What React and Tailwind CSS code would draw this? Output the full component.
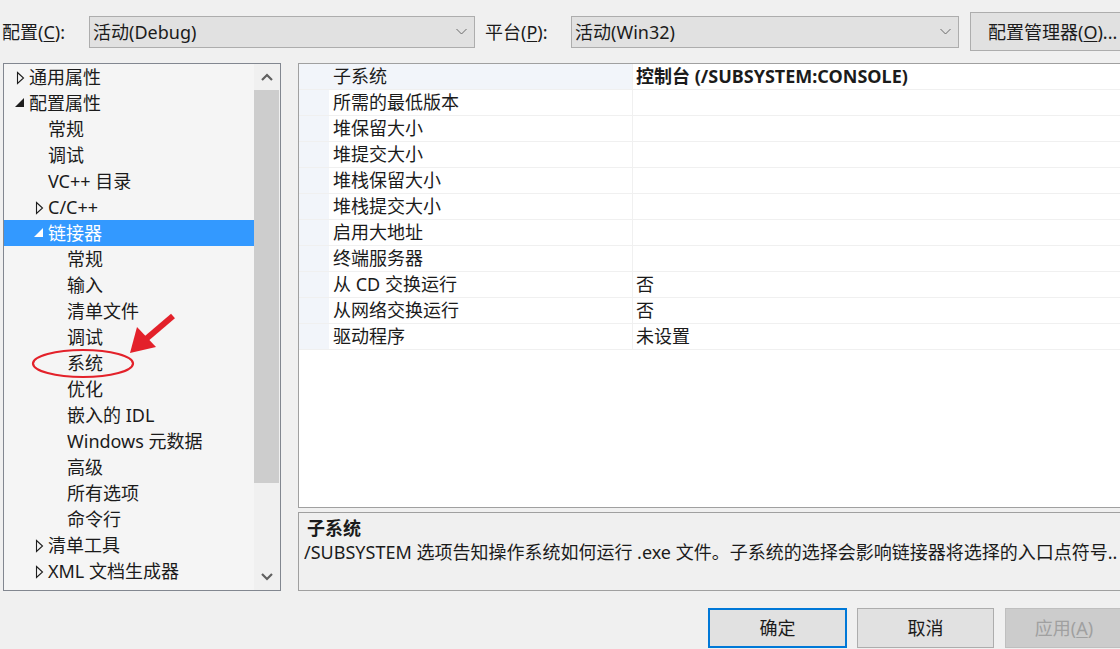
import React from "react";

const tree = [
  { t: "通用属性", l: 0, tri: "c" },
  { t: "配置属性", l: 0, tri: "e" },
  { t: "常规", l: 1 },
  { t: "调试", l: 1 },
  { t: "VC++ 目录", l: 1 },
  { t: "C/C++", l: 1, tri: "c" },
  { t: "链接器", l: 1, tri: "e", sel: true },
  { t: "常规", l: 2 },
  { t: "输入", l: 2 },
  { t: "清单文件", l: 2 },
  { t: "调试", l: 2 },
  { t: "系统", l: 2 },
  { t: "优化", l: 2 },
  { t: "嵌入的 IDL", l: 2 },
  { t: "Windows 元数据", l: 2 },
  { t: "高级", l: 2 },
  { t: "所有选项", l: 2 },
  { t: "命令行", l: 2 },
  { t: "清单工具", l: 1, tri: "c" },
  { t: "XML 文档生成器", l: 1, tri: "c" },
];

const props = [
  ["子系统", "控制台 (/SUBSYSTEM:CONSOLE)"],
  ["所需的最低版本", ""],
  ["堆保留大小", ""],
  ["堆提交大小", ""],
  ["堆栈保留大小", ""],
  ["堆栈提交大小", ""],
  ["启用大地址", ""],
  ["终端服务器", ""],
  ["从 CD 交换运行", "否"],
  ["从网络交换运行", "否"],
  ["驱动程序", "未设置"],
];

const padByLevel = ["pl-[9px]", "pl-[28px]", "pl-[47px]"];

function Tri({ kind, sel }) {
  if (kind === "c") {
    return (
      <svg width="16" height="26" className="shrink-0">
        <polygon points="4.5,8.5 10.5,14 4.5,19.5" fill="none" stroke="#1e1e1e" strokeWidth="1.1" />
      </svg>
    );
  }
  if (kind === "e") {
    return (
      <svg width="16" height="26" className="shrink-0">
        <polygon points="11,8 11,17 2,17" fill={sel ? "#ffffff" : "#1e1e1e"} />
      </svg>
    );
  }
  return <div className="w-[16px] shrink-0" />;
}

function ComboChevron() {
  return (
    <svg width="11" height="7" className="shrink-0">
      <polyline points="0.5,1 5.5,6 10.5,1" fill="none" stroke="#6a6a6a" strokeWidth="1" />
    </svg>
  );
}

export default function App() {
  return (
    <div className="relative w-[1120px] h-[649px] overflow-hidden bg-[#f0f0f0] text-[18px] text-[#1b1b1b] font-['Noto_Sans','Noto_Sans_CJK_SC',sans-serif]">
      {/* top bar */}
      <div className="flex items-center h-[63px] w-[1200px]">
        <div className="w-[89px] shrink-0 pl-[2px] leading-[26px] whitespace-nowrap">
          配置(<span className="underline underline-offset-2">C</span>):
        </div>
        <div className="w-[386px] h-[32px] shrink-0 bg-[#e1e1e1] border border-[#adadad] flex items-center pl-[3px] pr-[7px]">
          <span className="flex-1 leading-[26px]">活动(Debug)</span>
          <ComboChevron />
        </div>
        <div className="w-[96px] shrink-0 pl-[10px] leading-[26px] whitespace-nowrap">
          平台(<span className="underline underline-offset-2">P</span>):
        </div>
        <div className="w-[388px] h-[32px] shrink-0 bg-[#e1e1e1] border border-[#adadad] flex items-center pl-[3px] pr-[7px]">
          <span className="flex-1 leading-[26px]">活动(Win32)</span>
          <ComboChevron />
        </div>
        <div className="ml-[11px] w-[170px] h-[39px] shrink-0 bg-[#e1e1e1] border border-[#adadad] flex items-center pl-[17px] whitespace-nowrap leading-[26px]">
          配置管理器(<span className="underline underline-offset-2">O</span>)...
        </div>
      </div>

      {/* main area */}
      <div className="flex w-[1200px]">
        {/* tree panel */}
        <div className="ml-[3px] w-[278px] h-[528px] shrink-0 border border-[#828790] bg-[#f5f5f5] flex">
          <div className="w-[250px] shrink-0 flex flex-col">
            {tree.map((it, i) => (
              <div
                key={i}
                className={
                  "h-[26px] flex items-center whitespace-nowrap leading-[26px] " +
                  padByLevel[it.l] +
                  (it.sel ? " bg-[#3399ff] text-white" : "")
                }
              >
                <Tri kind={it.tri} sel={it.sel} />
                <span>{it.t}</span>
              </div>
            ))}
          </div>
          <div className="flex-1 bg-[#f0f0f0] flex flex-col">
            <div className="h-[26px] flex items-center justify-center">
              <svg width="12" height="8">
                <polyline points="1,7 6,2 11,7" fill="none" stroke="#606060" strokeWidth="2.2" />
              </svg>
            </div>
            <div className="h-[393px] bg-[#cdcdcd] mr-[1px]" />
            <div className="flex-1" />
            <div className="h-[26px] flex items-center justify-center">
              <svg width="12" height="8">
                <polyline points="1,1 6,6 11,1" fill="none" stroke="#606060" strokeWidth="2.2" />
              </svg>
            </div>
          </div>
        </div>

        {/* right side */}
        <div className="ml-[17px] shrink-0 flex flex-col">
          <div className="w-[830px] h-[445px] bg-white border-l border-t border-b border-[#a0a0a0] flex flex-col">
            {props.map(([n, v], i) => (
              <div key={i} className="h-[26px] shrink-0 flex border-b border-[#f0f0f0] leading-[25px] whitespace-nowrap">
                <div className="w-[30px] shrink-0 bg-[#f2f5fa]" />
                <div className={"w-[303px] shrink-0 pl-[4px] " + (i === 0 ? "bg-[#f2f5fa]" : "")}>{n}</div>
                <div className={"flex-1 border-l border-[#f0f0f0] pl-[3px] " + (i === 0 ? "font-bold" : "")}>{v}</div>
              </div>
            ))}
          </div>
          <div className="mt-[4px] w-[830px] h-[79px] bg-[#f0f0f0] border border-[#a0a0a0] pt-[3px] pl-[5px] leading-[24px] whitespace-nowrap overflow-hidden">
            <div className="font-bold pl-[3px]">子系统</div>
            <div className="w-[815px] overflow-hidden">
              /SUBSYSTEM 选项告知操作系统如何运行 .exe 文件。子系统的选择会影响链接器将选择的入口点符号..
            </div>
          </div>
        </div>
      </div>

      {/* bottom buttons */}
      <div className="flex mt-[17px] w-[1200px]">
        <div className="ml-[708px] w-[139px] h-[40px] shrink-0 border-2 border-[#0078d7] bg-[#e1e1e1] flex items-center justify-center leading-[26px]">
          确定
        </div>
        <div className="ml-[10px] w-[137px] h-[40px] shrink-0 border border-[#adadad] bg-[#e1e1e1] flex items-center justify-center leading-[26px]">
          取消
        </div>
        <div className="ml-[11px] w-[118px] h-[40px] shrink-0 border border-[#bfbfbf] bg-[#cccccc] text-[#a0a0a0] flex items-center justify-center leading-[26px]">
          应用(<span className="underline underline-offset-2">A</span>)
        </div>
      </div>

      {/* red annotation */}
      <svg className="absolute left-0 top-0 pointer-events-none" width="1120" height="649">
        <ellipse cx="83" cy="363.5" rx="50" ry="13.5" fill="none" stroke="#e3212a" strokeWidth="2.2" />
        <line x1="173" y1="316" x2="146" y2="339" stroke="#e3212a" strokeWidth="6" />
        <polygon points="130,353 137,327 156,347" fill="#e3212a" />
      </svg>
    </div>
  );
}
